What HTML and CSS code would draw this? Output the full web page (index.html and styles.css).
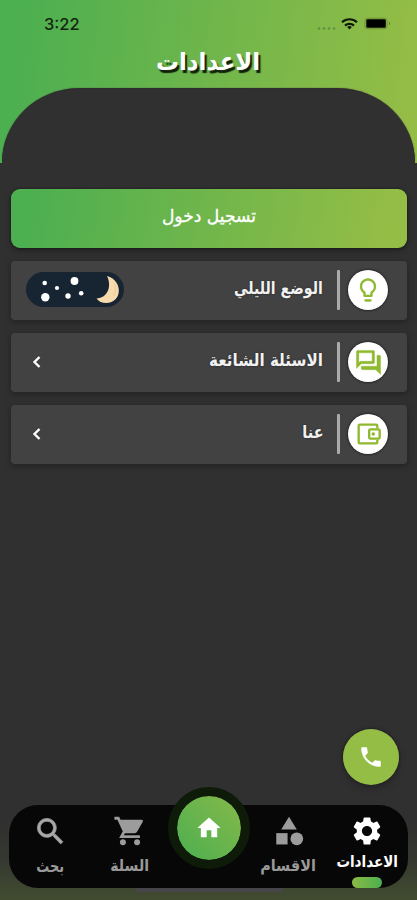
FILE: index.html
```html
<!DOCTYPE html>
<html lang="ar" dir="rtl">
<head>
<meta charset="utf-8">
<meta name="viewport" content="width=device-width, initial-scale=1">
<title>الاعدادات</title>
<link rel="stylesheet" href="styles.css">
</head>
<body>
<div class="screen">
  <header class="header">
    <div class="status" dir="ltr">
      <span class="time">3:22</span>
      <svg class="indicators" width="78" height="20" viewBox="0 0 78 20">
        <g fill="#5f9140"><circle cx="4" cy="14.5" r="1.3"/><circle cx="9" cy="14.5" r="1.3"/><circle cx="14" cy="14.5" r="1.3"/><circle cx="19" cy="14.5" r="1.3"/></g>
        <g fill="none" stroke="#10180a" stroke-width="2.2"><path d="M27 8.200a11 11 0 0 1 15 0"/><path d="M30 11.600a6.700 6.700 0 0 1 9 0"/></g>
        <path d="M34.500 15.600l-2.400-2.500a3.500 3.500 0 0 1 4.800 0z" fill="#10180a"/>
        <rect x="50" y="4.200" width="22" height="10.600" rx="2.500" fill="none" stroke="#6f8d35"/>
        <rect x="51.300" y="5.200" width="19.500" height="8.600" rx="1.200" fill="#000"/>
        <path d="M74 7.500q2 2 0 4z" fill="#5c762d"/>
      </svg>
    </div>
    <h1 class="title"><span>الاعدادات</span></h1>
    <div class="arch"></div>
  </header>

  <main class="content">
    <button class="login"><span>تسجيل دخول</span></button>
    <section class="card">
      <span class="badge"><svg width="28" height="28" viewBox="0 0 24 24"><path fill="#8fb92e" d="M9 21c0 .5.400 1 1 1h4c.600 0 1-.500 1-1v-1H9v1zm3-19C8.100 2 5 5.100 5 9c0 2.400 1.200 4.500 3 5.700V17c0 .500.400 1 1 1h6c.600 0 1-.500 1-1v-2.300c1.800-1.300 3-3.400 3-5.700 0-3.900-3.100-7-7-7zm2.900 11.100-.900.600V16h-4v-2.300l-.900-.600A5 5 0 0 1 7 9c0-2.800 2.200-5 5-5s5 2.200 5 5c0 1.600-.800 3.200-2.100 4.100z"/></svg></span>
      <span class="rule"></span>
      <span class="label label-night">الوضع الليلي</span>
      <svg class="toggle" width="98" height="36" viewBox="0 0 98 36">
        <rect width="98" height="35" rx="17.500" fill="#172532"/>
        <g fill="#fff"><circle cx="18.700" cy="11" r="2.300"/><circle cx="31" cy="16" r="2.100"/><circle cx="48.500" cy="9" r="3.900"/><circle cx="19.300" cy="25.300" r="4.200"/><circle cx="42" cy="24" r="2.700"/><circle cx="55.200" cy="21.300" r="2.300"/></g>
        <path d="M81 4C97 8 97 31 80 31Q74 31 70.500 26.500C82 26 86 14 81 4z" fill="#f8dbad"/>
        <path d="M88 11q3.500 6-.500 13" fill="none" stroke="#ecd0a3" stroke-width="1.500"/>
      </svg>
    </section>
    <section class="card">
      <span class="badge"><svg width="29" height="29" viewBox="0 0 24 24"><path fill="#8fb92e" stroke="#8fb92e" stroke-width=".3" d="M15 4v7H5.170L4 12.170V4h11m1-2H3c-.550 0-1 .450-1 1v14l4-4h10c.550 0 1-.450 1-1V3c0-.550-.450-1-1-1zm5 4h-2v9H6v2c0 .550.450 1 1 1h11l4 4V7c0-.550-.450-1-1-1z"/></svg></span>
      <span class="rule"></span>
      <span class="label label-faq">الاسئلة الشائعة</span>
      <svg class="chevron" width="10" height="14" viewBox="0 0 10 14"><path d="M7.500 2L2.500 7l5 5"/></svg>
    </section>
    <section class="card">
      <span class="badge"><svg width="28" height="28" viewBox="0 0 24 24"><g fill="none" stroke="#8fb92e" stroke-width="2"><path d="M20 7V5a1 1 0 0 0-1-1H5a1 1 0 0 0-1 1v14a1 1 0 0 0 1 1h14a1 1 0 0 0 1-1v-2"/><rect x="13" y="8" width="9" height="8" rx="1"/></g><circle cx="16.500" cy="12" r="1.500" fill="#8fb92e"/></svg></span>
      <span class="rule"></span>
      <span class="label label-about">عنا</span>
      <svg class="chevron" width="10" height="14" viewBox="0 0 10 14"><path d="M7.500 2L2.500 7l5 5"/></svg>
    </section>
  </main>

  <button class="call"><svg width="26" height="26" viewBox="0 0 24 24"><path fill="#fff" d="M6.620 10.790c1.440 2.830 3.760 5.140 6.590 6.590l2.200-2.200c.270-.270.670-.360 1.020-.240 1.120.370 2.330.570 3.570.570.550 0 1 .450 1 1V20c0 .550-.450 1-1 1-9.390 0-17-7.610-17-17 0-.550.450-1 1-1h3.500c.550 0 1 .450 1 1 0 1.250.200 2.450.570 3.570.110.350.030.740-.250 1.020l-2.200 2.200z"/></svg></button>

  <footer class="dock">
    <nav class="nav">
      <a class="item active">
        <svg width="34" height="34" viewBox="0 0 24 24"><path fill="#fff" d="M19.140 12.940c.040-.300.060-.610.060-.940 0-.320-.020-.640-.070-.940l2.030-1.580c.180-.140.230-.410.120-.610l-1.920-3.320c-.120-.220-.370-.290-.590-.220l-2.390.960c-.500-.380-1.030-.700-1.620-.940l-.360-2.540c-.040-.240-.240-.410-.480-.410h-3.840c-.240 0-.430.170-.470.410l-.360 2.540c-.590.240-1.130.570-1.620.940l-2.390-.960c-.220-.080-.470 0-.590.220L2.740 8.870c-.120.210-.080.470.120.610l2.030 1.580c-.050.300-.090.630-.090.940s.020.640.070.940l-2.030 1.580c-.180.140-.230.410-.120.610l1.920 3.320c.120.220.370.290.590.220l2.390-.960c.500.380 1.030.700 1.620.940l.360 2.540c.050.240.240.410.480.410h3.840c.240 0 .440-.170.470-.410l.360-2.540c.590-.240 1.130-.560 1.620-.940l2.390.960c.220.080.470 0 .590-.220l1.920-3.320c.120-.220.070-.470-.120-.610l-2.010-1.580zM12 15.600c-1.980 0-3.600-1.620-3.600-3.600s1.620-3.600 3.600-3.600 3.600 1.620 3.600 3.600-1.620 3.600-3.600 3.600z"/></svg>
        <span class="text-settings">الاعدادات</span>
        <i class="pill"></i>
      </a>
      <a class="item">
        <svg width="34" height="34" viewBox="0 0 24 24"><g fill="#9c9c9c"><path d="M12 2l5.500 9h-11z"/><circle cx="17.500" cy="17.500" r="4.500"/><path d="M3 13.500h8v8H3z"/></g></svg>
        <span class="text-sections">الاقسام</span>
      </a>
      <a class="home"><svg width="28" height="28" viewBox="0 0 24 24"><path fill="#fff" d="M10 20v-6h4v6h5v-8h3L12 3 2 12h3v8z"/></svg></a>
      <a class="item">
        <svg width="34" height="34" viewBox="0 0 24 24"><g fill="#9c9c9c"><circle cx="7" cy="20" r="2.100"/><circle cx="17" cy="20" r="2.100"/><path d="M5 4h15q1.500 0 1 1.500l-4 7q-.500 1-1.700 1H8z"/></g><path d="M1 3h2.700l4.300 9.300-2 3.700h13" fill="none" stroke="#9c9c9c" stroke-width="2"/></svg>
        <span class="text-cart">السلة</span>
      </a>
      <a class="item">
        <svg width="35" height="35" viewBox="0 0 24 24"><path fill="#a8a8a8" stroke="#a8a8a8" stroke-width=".5" d="M15.500 14h-.790l-.280-.270A6.471 6.471 0 0 0 16 9.500 6.500 6.500 0 1 0 9.500 16c1.610 0 3.090-.590 4.230-1.570l.270.280v.790l5 4.990L20.490 19l-4.990-5zm-6 0C7.010 14 5 11.990 5 9.500S7.010 5 9.500 5 14 7.010 14 9.500 11.990 14 9.500 14z"/></svg>
        <span class="text-search">بحث</span>
      </a>
    </nav>
    <div class="gesture"></div>
  </footer>
</div>
</body>
</html>
```
FILE: styles.css
```css
* { box-sizing: border-box; }
body { margin: 0; background: #303030; font-family: "DejaVu Sans", sans-serif; }
button { border: 0; padding: 0; font-family: inherit; }

.screen { width: 417px; height: 900px; display: flex; flex-direction: column; background: #303030; overflow: hidden; }

.header { height: 163px; flex: none; display: flex; flex-direction: column; background: linear-gradient(97deg, #4caf50 5%, #94bd46 97%); }
.status { height: 44px; padding: 14px 24px 0 44px; display: flex; justify-content: space-between; }
.time { font: 500 16.500px/21px Inter, sans-serif; color: #14260f; }
.title { height: 45px; margin: 0; display: flex; justify-content: center; font-size: 22px; line-height: 37px; color: #fff; text-shadow: 2px 2px 1px #10200c; }
.title span { transform: scale(1.04, 1.1); }
.arch { flex: 1; margin: 0 2px; background: #303030; border-radius: 77px 77px 0 0 / 74px 74px 0 0; box-shadow: 0 -1px 1px #291d2d; }

.content { padding: 26px 10px 0 11px; display: flex; flex-direction: column; gap: 13.500px; }
.login { height: 58.500px; flex: none; border-radius: 9px; background: linear-gradient(100deg, #4caf50 5%, #94bd46 94%); color: #fff; font-size: 16px; line-height: 54px; padding-bottom: 4px; box-shadow: 0 0 2px #171019, 0 3px 5px #222; }
.login span { display: inline-block; transform: scale(1.07, 1.1); -webkit-text-stroke: .3px #fff; }
.card { height: 58.500px; flex: none; display: flex; align-items: center; padding: 0 19px 0 15px; border-radius: 4px; background: #424242; box-shadow: 0 2px 5px 1px #252525; }
.badge { width: 40px; height: 40px; border-radius: 50%; display: flex; align-items: center; justify-content: center; background: #fff; box-shadow: 0 0 2px 1px #282828; }
.rule { width: 3px; height: 40px; margin-right: 8px; background: #aaa; border-radius: 1px; }
.label { margin-right: 14px; margin-left: auto; font-size: 16px; line-height: 24px; font-weight: 700; color: #f2f2f2; white-space: nowrap; text-shadow: 0 0 2px #222; padding-bottom: 2px; transform-origin: right center; }
.label-night { transform: scale(.88, 1.08); }
.label-faq { transform: scale(.95, 1.08); }
.label-about { transform: scale(.9, 1.08); }
.chevron { margin-left: 6px; }
.chevron path { fill: none; stroke: #fff; stroke-width: 2.400; }

.call { width: 56px; height: 56px; margin: auto 18px 20px auto; border-radius: 50%; flex: none; display: flex; align-items: center; justify-content: center; background: #94bd46; box-shadow: 0 0 2px 1px #242028, 0 4px 6px #272727; }

.dock { height: 95px; flex: none; padding: 0 9px; background: linear-gradient(#303030 15%, #343730 55%, #424c30 100%); }
.nav { height: 83px; padding: 0 2px; border-radius: 29px; background: #070707; display: grid; grid-template-columns: 78px 79px 80px 79px 79px; }
.item { display: flex; flex-direction: column; align-items: center; padding-top: 9px; color: #999; font-size: 15px; font-weight: 700; }
.item span { line-height: 22px; margin-top: 7px; white-space: nowrap; }
.text-settings { transform: scale(.9, 1.05); }
.text-sections { transform: scale(.96, 1.08); }
.text-cart { transform: scale(.94, 1.08); }
.text-search { transform: scale(.86, 1.08); }
.active { color: #fff; }
.item.active span { margin-top: 3px; }
.pill { width: 30px; height: 11px; margin-top: 4px; border-radius: 6px; background: linear-gradient(90deg, #8cba46, #4caf50); }
.home { width: 82px; height: 82px; margin: -18px -1px 0; border: 9px solid #0d1b08; border-radius: 50%; display: flex; align-items: center; justify-content: center; background: linear-gradient(45deg, #4caf50, #85b94a) padding-box; }
.gesture { width: 148px; height: 4px; margin: 0 auto; border-radius: 0 0 3px 3px; background: #45454a; }
```
